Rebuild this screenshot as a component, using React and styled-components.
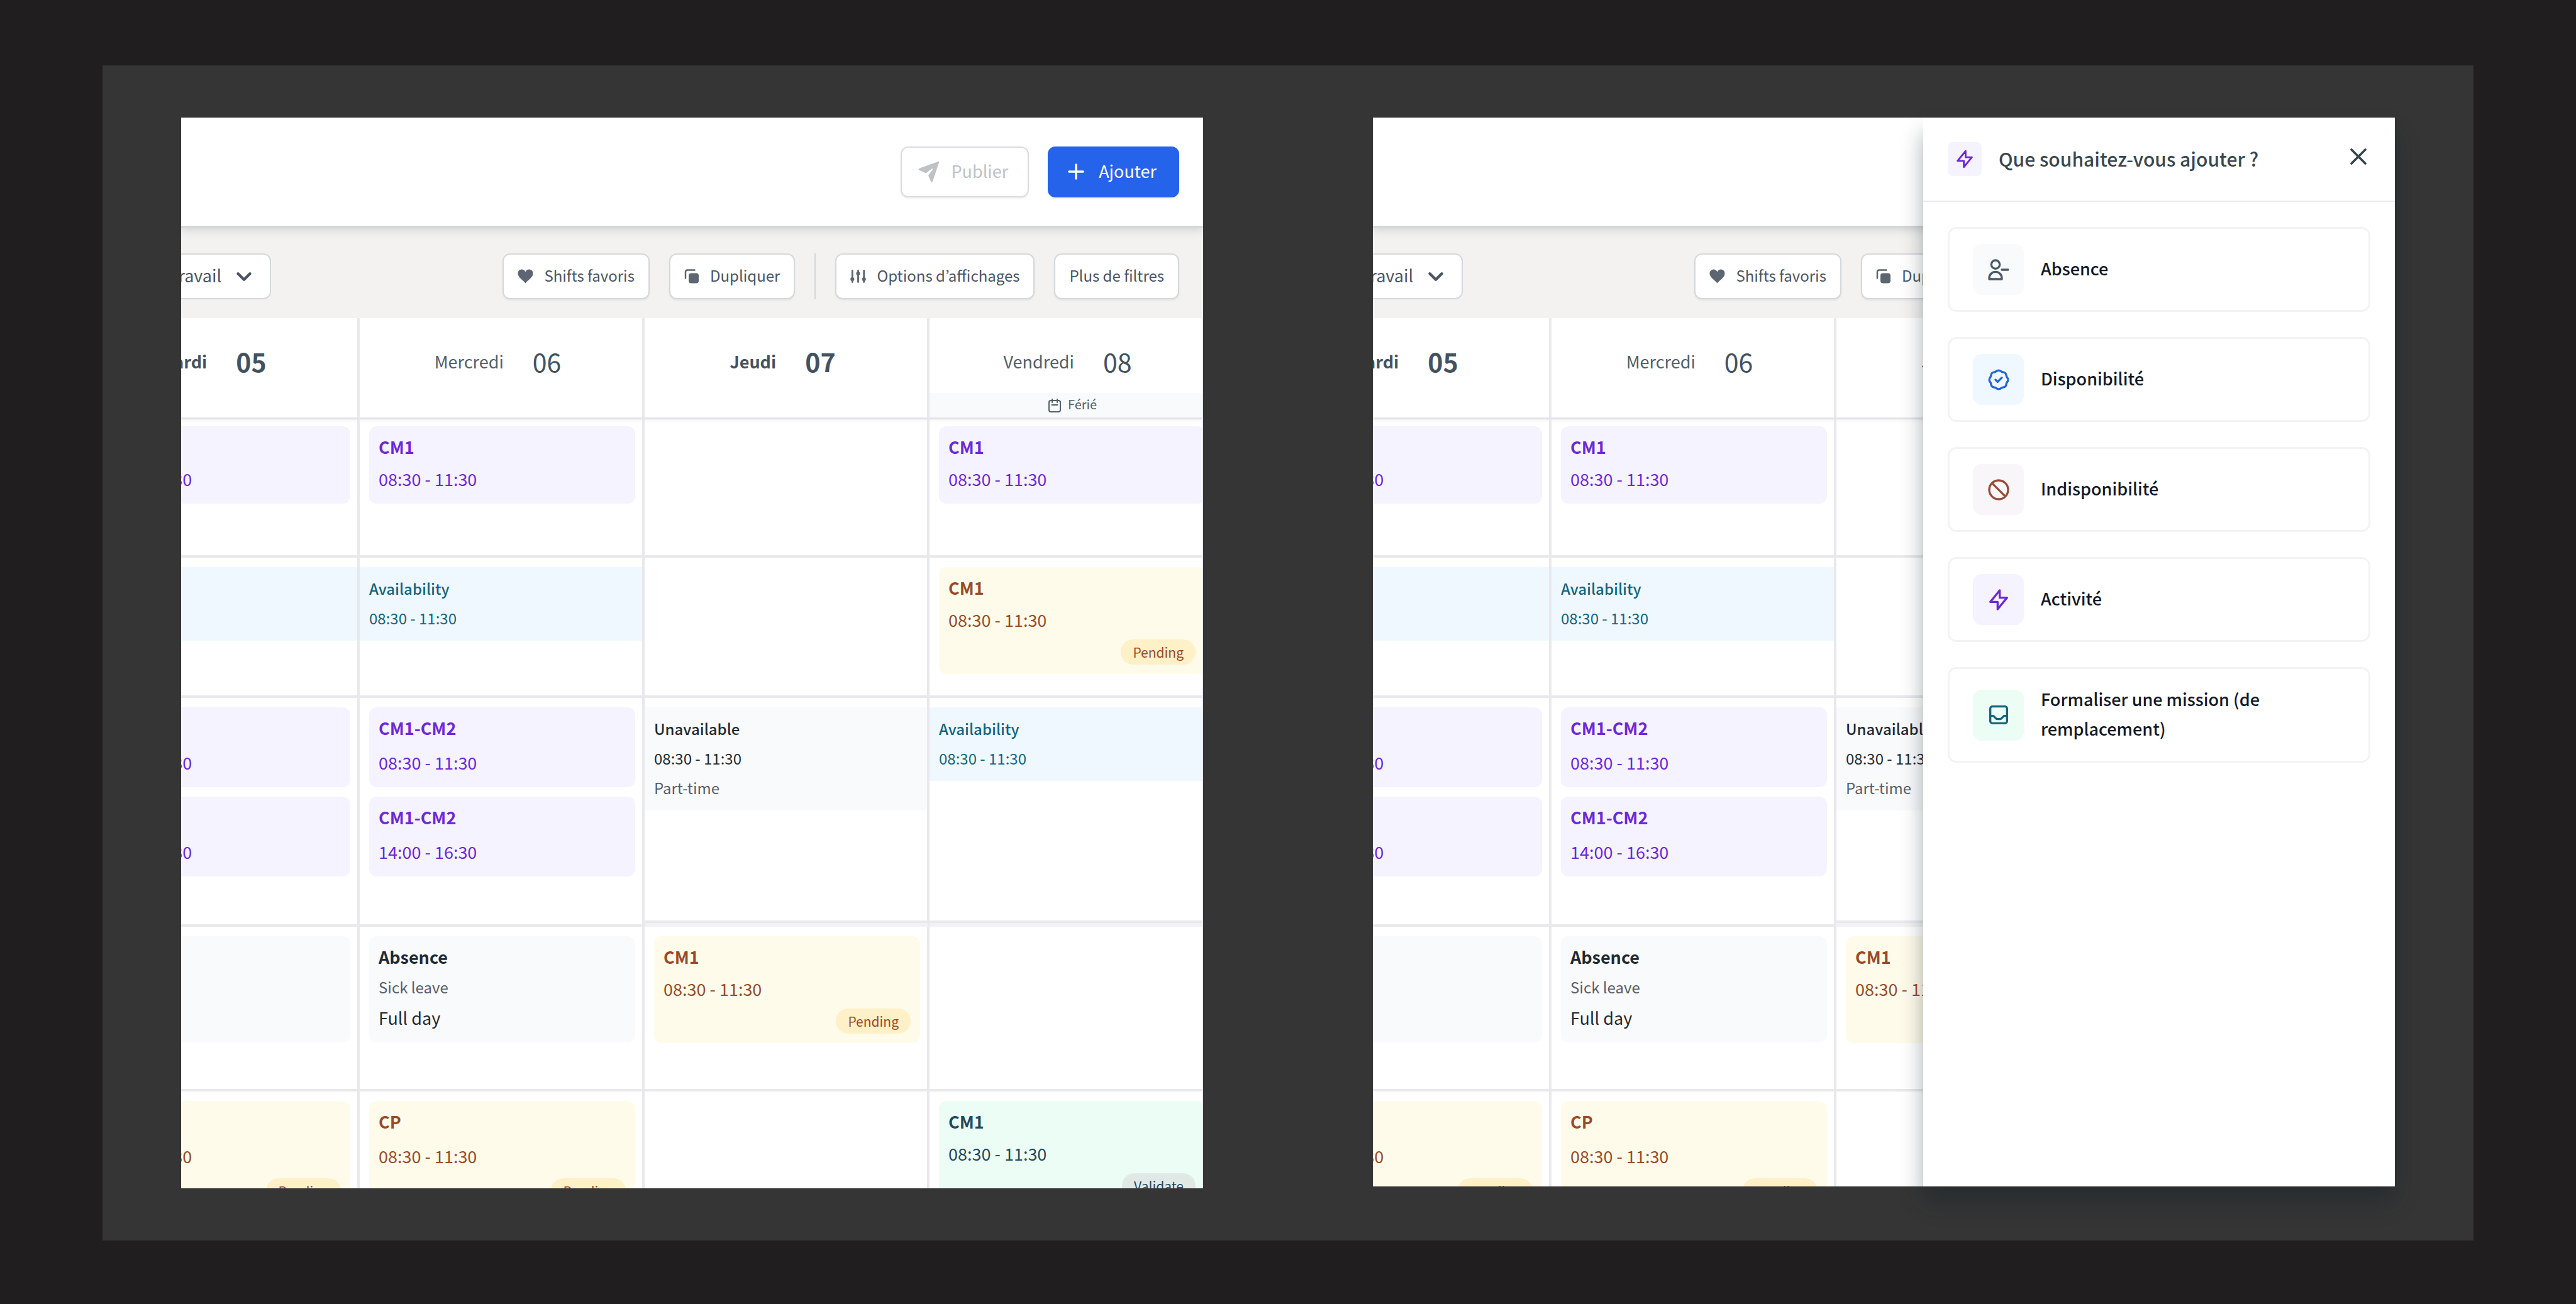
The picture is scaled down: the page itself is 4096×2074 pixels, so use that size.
import React from "react";
import styled, { createGlobalStyle } from "styled-components";
import { ChevronDown, Plus, X } from "lucide-react";

const GlobalStyle = createGlobalStyle`
  * { box-sizing: border-box; }
  html, body, #root { height: 100%; }
  body {
    margin: 0;
    background: #211e1f;
    font-family: "Noto Sans CJK JP", "Noto Sans", sans-serif;
    font-size: 27px;
    color: #1f2933;
  }
  button, select { font: inherit; color: inherit; }
`;

const Page = styled.main`
  min-height: 100%;
  padding: 104px 163px 102px;
  display: flex;
`;

const Board = styled.div`
  flex: 1;
  display: flex;
  gap: 270px;
  padding: 83px 125px;
  background: #353535;
`;

const Screen = styled.section`
  position: relative;
  flex: 1;
  min-width: 0;
  height: ${(p) => p.$height}px;
`;

const Viewport = styled.div`
  height: 100%;
  overflow: hidden;
  background: #fff;
`;

const Label = styled.span`
  padding-bottom: 4px;
`;

const TopBar = styled.header`
  position: relative;
  display: flex;
  justify-content: flex-end;
  align-items: center;
  gap: 30px;
  height: 172px;
  padding: 0 38px;
  background: #fff;
  box-shadow: 0 4px 1px #d6d7d7, 0 4px 16px rgba(30, 50, 60, 0.22);
`;

const ActionButton = styled.button`
  display: flex;
  align-items: center;
  gap: 17px;
  height: 81px;
  padding: 0 ${(p) => (p.$primary ? 34 : 31)}px 0 ${(p) => (p.$primary ? 24 : 25)}px;
  border: 2px solid ${(p) => (p.$primary ? "#2563eb" : "#dadcdf")};
  border-radius: 12px;
  background: ${(p) => (p.$primary ? "#2563eb" : "#fff")};
  color: ${(p) => (p.$primary ? "#fff" : "#bfc2c5")};
  box-shadow: 0 2px 3px rgba(0, 0, 0, 0.06);
`;

const Toolbar = styled.div`
  display: flex;
  align-items: stretch;
  gap: 31px;
  padding: 44px 38px 30px 0;
  background: #f3f2f0;
`;

const FilterSlot = styled.div`
  display: flex;
  justify-content: flex-end;
  width: 143px;
  margin-right: auto;
`;

const SelectBox = styled.div`
  flex: none;
  display: flex;
  align-items: center;
  gap: 16px;
  padding: 0 22px;
  border: 2px solid #d5d8dc;
  border-radius: 12px;
  background: #fff;
  color: #4b5563;
`;

const Select = styled.select`
  appearance: none;
  border: 0;
  padding: 0 0 4px;
  background: transparent;
`;

const ToolButton = styled.button`
  display: flex;
  align-items: center;
  gap: 17px;
  height: 73px;
  padding: 0 22px;
  border: 2px solid #d5d8dc;
  border-radius: 12px;
  background: #fff;
  color: #4b5563;
  font-size: 24px;
  white-space: nowrap;
  box-shadow: 0 2px 3px rgba(0, 0, 0, 0.06);

  svg {
    color: #5b6672;
  }
`;

const Divider = styled.span`
  width: 2px;
  background: #d3d7dc;
`;

const GridFrame = styled.div`
  overflow: hidden;
  border-right: 2px solid #e9eaee;
`;

const Grid = styled.table`
  width: calc(100% + 189px);
  margin-left: -169px;
  table-layout: fixed;
  border-collapse: separate;
  border-spacing: 0;
`;

const DayHead = styled.th`
  height: 161px;
  padding: 0;
  vertical-align: top;
  font-weight: ${(p) => (p.$strong ? 700 : 400)};
  color: ${(p) => (p.$strong ? "#44525f" : "#535f6b")};
  border-right: 4px solid #e8e8ed;
  border-bottom: 3px solid #e1e3e6;
`;

const DayLabel = styled.div`
  display: flex;
  justify-content: center;
  align-items: center;
  gap: 46px;
  height: 119px;
  padding: 17px 10px 0 0;
`;

const DayNumber = styled.span`
  font-size: 41px;
  color: #44525f;
`;

const Holiday = styled.div`
  display: flex;
  justify-content: center;
  align-items: center;
  gap: 11px;
  height: 39px;
  padding-left: 6px;
  background: #f9fafc;
  font-size: 20px;
  font-weight: 400;
`;

const Row = styled.tr`
  height: ${(p) => p.$h}px;
`;

const Cell = styled.td`
  padding: ${(p) => (p.$first ? 11 : 15)}px 0 0;
  vertical-align: top;
  border-right: 4px solid #e8e8ed;
  border-bottom: ${(p) => (p.$split ? "6px solid #f3f2f3" : "4px solid #e8e8ed")};
  box-shadow: ${(p) =>
    p.$split ? "inset 0 -4px 0 #e8e9ee" : p.$first ? "inset 0 5px 5px -3px rgba(0,0,0,0.05)" : "none"};
`;

const tones = {
  violet: { bg: "#f5f3ff", fg: "#6d28d9" },
  amber: { bg: "#fffbeb", fg: "#9a4a27", badge: "#fef0c7" },
  green: { bg: "#ecfdf5", fg: "#24485c", badge: "#e1e9e7" },
  grey: { bg: "#f9fafc", fg: "#1f2a33" },
  sky: { bg: "#f0f8ff", fg: "#12657f" },
};

const Card = styled.article`
  display: flex;
  flex-direction: column;
  margin: 0 11px 15px 15px;
  padding: 7px 15px 14px;
  border-radius: 12px;
  background: ${(p) => tones[p.$tone].bg};
  color: ${(p) => tones[p.$tone].fg};
  line-height: 51px;
`;

const CardTitle = styled.strong`
  font-weight: 700;
  margin-bottom: ${(p) => (p.$loose ? 4 : 0)}px;
`;

const CardNote = styled.span`
  font-size: 24px;
  line-height: 46px;
  color: #56606c;
`;

const Badge = styled.span`
  align-self: flex-end;
  margin: ${(p) => (p.$loose ? 10 : 6)}px 0 1px;
  padding: 0 19px;
  border-radius: 20px;
  background: ${(p) => tones[p.$tone].badge};
  font-size: 21px;
  line-height: 40px;
`;

const Band = styled.article`
  display: flex;
  flex-direction: column;
  padding: 10px 15px 13px;
  background: ${(p) => tones[p.$tone].bg};
  color: ${(p) => tones[p.$tone].fg};
  font-size: 24px;
  line-height: 47px;
`;

const BandTitle = styled.strong`
  font-weight: 500;
`;

const BandNote = styled.span`
  color: #56606c;
`;

const Drawer = styled.aside`
  position: absolute;
  top: 0;
  right: 0;
  bottom: 0;
  width: 750px;
  background: #fff;
  box-shadow: 0 24px 34px -2px rgba(16, 32, 40, 0.4);
`;

const DrawerHead = styled.header`
  display: flex;
  align-items: center;
  height: 134px;
  padding: 0 36px 0 39px;
  border-bottom: 2px solid #e9ebed;
  color: #37474f;
`;

const DrawerTitle = styled.h2`
  flex: 1;
  margin: 0 0 0 27px;
  padding-bottom: 3px;
  font-size: 30px;
  font-weight: 500;
`;

const CloseButton = styled.button`
  display: flex;
  padding: 0 0 8px;
  border: 0;
  background: none;
`;

const IconTile = styled.span`
  flex: none;
  display: flex;
  align-items: center;
  justify-content: center;
  width: ${(p) => p.$size}px;
  height: ${(p) => p.$size}px;
  border-radius: ${(p) => (p.$size > 60 ? 14 : 8)}px;
  background: ${(p) => p.$bg};
  color: ${(p) => p.$fg};
`;

const Choices = styled.div`
  display: flex;
  flex-direction: column;
  gap: 40px;
  padding: 40px 39px;
`;

const Choice = styled.button`
  display: flex;
  align-items: center;
  gap: 27px;
  padding: 24px 37px;
  border: 3px solid #f3f3f5;
  border-radius: 14px;
  background: #fff;
  color: #111827;
  font-weight: 500;
  line-height: 47px;
  text-align: left;
`;

const SendIcon = () => (
  <svg width="36" height="36" viewBox="0 0 36 36" fill="currentColor" aria-hidden="true">
    <path d="M34 2 L23.5 33.5 Q22.8 35 21.6 33.4 L18 25.5 Q17.4 23.8 18.4 22.6 L24.5 15 Q25 12 22.4 12.8 L14.5 19.2 Q13.4 20 12.2 19.4 L2.6 15.2 Q1.2 14.4 2.6 13.4 Z" stroke="currentColor" strokeLinejoin="round" />
  </svg>
);

const HeartIcon = () => (
  <svg width="25" height="23" viewBox="0 0 25 23" fill="currentColor" aria-hidden="true">
    <path d="M12.5 22.5 C9 18 1 13.5 0.5 7.5 C0.2 3.5 3 0.5 6.6 0.5 C9.3 0.5 11.5 2 12.5 4.4 C13.5 2 15.7 0.5 18.4 0.5 C22 0.5 24.8 3.5 24.5 7.5 C24 13.5 16 18 12.5 22.5 Z" />
  </svg>
);

const CopyIcon = () => (
  <svg width="24" height="23" viewBox="0 0 24 23" aria-hidden="true">
    <rect x="7" y="6.5" width="16" height="16" rx="4" fill="currentColor" />
    <path d="M2 14.5 V4.5 Q2 1.5 5 1.5 H16.5" fill="none" stroke="currentColor" strokeWidth="2.5" strokeLinecap="round" />
  </svg>
);

const SlidersIcon = () => (
  <svg width="25" height="25" viewBox="0 0 25 25" fill="none" stroke="currentColor" strokeWidth="2.8" strokeLinecap="round" aria-hidden="true">
    <path d="M3.3 3.5 V21.5 M12.5 3.5 V21.5 M21.7 3.5 V21.5" />
    <g fill="currentColor" strokeWidth="0">
      <circle cx="3.3" cy="17" r="3.1" />
      <circle cx="12.5" cy="8" r="3.1" />
      <circle cx="21.7" cy="17" r="3.1" />
    </g>
  </svg>
);

const CalendarIcon = () => (
  <svg width="20" height="22" viewBox="0 0 20 22" fill="none" stroke="currentColor" strokeWidth="2" strokeLinecap="round" aria-hidden="true">
    <rect x="1" y="3" width="18" height="18" rx="3" />
    <path d="M6 1 V6 M14 1 V6 M5.5 10 H14.5" />
  </svg>
);

const outlines = {
  userRemove: "M13 7a4 4 0 11-8 0 4 4 0 018 0zM9 14a6 6 0 00-6 6v1h12v-1a6 6 0 00-6-6zM21 12h-6",
  badgeCheck:
    "M9 12l2 2 4-4M7.835 4.697a3.42 3.42 0 001.946-.806 3.42 3.42 0 014.438 0 3.42 3.42 0 001.946.806 3.42 3.42 0 013.138 3.138 3.42 3.42 0 00.806 1.946 3.42 3.42 0 010 4.438 3.42 3.42 0 00-.806 1.946 3.42 3.42 0 01-3.138 3.138 3.42 3.42 0 00-1.946.806 3.42 3.42 0 01-4.438 0 3.42 3.42 0 00-1.946-.806 3.42 3.42 0 01-3.138-3.138 3.42 3.42 0 00-.806-1.946 3.42 3.42 0 010-4.438 3.42 3.42 0 00.806-1.946 3.42 3.42 0 013.138-3.138z",
  ban: "M18.364 18.364A9 9 0 005.636 5.636m12.728 12.728A9 9 0 015.636 5.636m12.728 12.728L5.636 5.636",
  bolt: "M13 10V3L4 14h7v7l9-11h-7z",
  inbox:
    "M20 13V6a2 2 0 00-2-2H6a2 2 0 00-2 2v7m16 0v5a2 2 0 01-2 2H6a2 2 0 01-2-2v-5m16 0h-2.586a1 1 0 00-.707.293l-2.414 2.414a1 1 0 01-.707.293h-3.172a1 1 0 01-.707-.293l-2.414-2.414A1 1 0 006.586 13H4",
};

const OutlineIcon = ({ name, size = 40 }) => (
  <svg width={size} height={size} viewBox="0 0 24 24" fill="none" stroke="currentColor" strokeWidth="2" strokeLinecap="round" strokeLinejoin="round" aria-hidden="true">
    <path d={outlines[name]} />
  </svg>
);

const days = [
  { name: "Mardi", number: "05", strong: true },
  { name: "Mercredi", number: "06" },
  { name: "Jeudi", number: "07", strong: true },
  { name: "Vendredi", number: "08", holiday: "Férié" },
];

const AM = "08:30 - 11:30";
const PM = "14:00 - 16:30";
const card = (tone, title, time, extra = {}) => ({ kind: "card", tone, title, time, ...extra });
const band = (tone, title, time, note) => ({ kind: "band", tone, title, time, note });

const doubleShift = [
  card("violet", "CM1-CM2", AM, { loose: true }),
  card("violet", "CM1-CM2", PM, { loose: true }),
];
const sick = [card("grey", "Absence", "Full day", { note: "Sick leave" })];
const pending = { badge: "Pending" };

const rows = [
  { h: 220, cells: [[card("violet", "CM1", AM)], [card("violet", "CM1", AM)], [], [card("violet", "CM1", AM)]] },
  { h: 223, cells: [[band("sky", "", "")], [band("sky", "Availability", AM)], [], [card("amber", "CM1", AM, pending)]] },
  {
    h: 364,
    split: true,
    cells: [doubleShift, doubleShift, [band("grey", "Unavailable", AM, "Part-time")], [band("sky", "Availability", AM)]],
  },
  { h: 262, cells: [sick, sick, [card("amber", "CM1", AM, pending)], []] },
  {
    h: 262,
    cells: [
      [card("amber", "CP", AM, { ...pending, loose: true })],
      [card("amber", "CP", AM, { ...pending, loose: true })],
      [],
      [card("green", "CM1", AM, { badge: "Validate" })],
    ],
  },
];

const Entry = ({ item }) =>
  item.kind === "card" ? (
    <Card $tone={item.tone}>
      <CardTitle $loose={item.loose}>{item.title}</CardTitle>
      {item.note && <CardNote>{item.note}</CardNote>}
      <span>{item.time}</span>
      {item.badge && (
        <Badge $tone={item.tone} $loose={item.loose}>
          {item.badge}
        </Badge>
      )}
    </Card>
  ) : (
    <Band $tone={item.tone}>
      <BandTitle>{item.title || "\u00a0"}</BandTitle>
      <span>{item.time || "\u00a0"}</span>
      {item.note && <BandNote>{item.note}</BandNote>}
    </Band>
  );

const Planning = () => (
  <Viewport>
    <TopBar>
      <ActionButton type="button">
        <SendIcon />
        <Label>Publier</Label>
      </ActionButton>
      <ActionButton type="button" $primary>
        <Plus size={38} strokeWidth={2.2} />
        <Label>Ajouter</Label>
      </ActionButton>
    </TopBar>
    <Toolbar>
      <FilterSlot>
        <SelectBox>
          <Select aria-label="Lieu de travail">
            <option>Lieu de travail</option>
          </Select>
          <ChevronDown size={38} strokeWidth={2.8} />
        </SelectBox>
      </FilterSlot>
      <ToolButton type="button">
        <HeartIcon />
        <Label>Shifts favoris</Label>
      </ToolButton>
      <ToolButton type="button">
        <CopyIcon />
        <Label>Dupliquer</Label>
      </ToolButton>
      <Divider />
      <ToolButton type="button">
        <SlidersIcon />
        <Label>Options d’affichages</Label>
      </ToolButton>
      <ToolButton type="button">
        <Label>Plus de filtres</Label>
      </ToolButton>
    </Toolbar>
    <GridFrame>
      <Grid>
        <thead>
          <tr>
            {days.map((day) => (
              <DayHead key={day.number} scope="col" $strong={day.strong}>
                <DayLabel>
                  <span>{day.name}</span>
                  <DayNumber>{day.number}</DayNumber>
                </DayLabel>
                {day.holiday && (
                  <Holiday>
                    <CalendarIcon />
                    <Label>{day.holiday}</Label>
                  </Holiday>
                )}
              </DayHead>
            ))}
          </tr>
        </thead>
        <tbody>
          {rows.map((row, r) => (
            <Row key={r} $h={row.h}>
              {row.cells.map((items, c) => (
                <Cell key={c} $first={r === 0} $split={row.split && c > 1}>
                  {items.map((item, i) => (
                    <Entry key={i} item={item} />
                  ))}
                </Cell>
              ))}
            </Row>
          ))}
        </tbody>
      </Grid>
    </GridFrame>
  </Viewport>
);

const choices = [
  { label: "Absence", icon: "userRemove", bg: "#f9fafb", fg: "#4b5a67" },
  { label: "Disponibilité", icon: "badgeCheck", bg: "#f0f8ff", fg: "#2166d6" },
  { label: "Indisponibilité", icon: "ban", bg: "#f8f6f8", fg: "#9a4a35" },
  { label: "Activité", icon: "bolt", bg: "#f5f3ff", fg: "#6d28d9" },
  { label: "Formaliser une mission (de remplacement)", icon: "inbox", bg: "#ecfdf5", fg: "#12657f" },
];

const AddDrawer = () => (
  <Drawer aria-label="Ajouter">
    <DrawerHead>
      <IconTile $size={54} $bg="#f5f3ff" $fg="#6d28d9">
        <OutlineIcon name="bolt" size={34} />
      </IconTile>
      <DrawerTitle>Que souhaitez-vous ajouter ?</DrawerTitle>
      <CloseButton type="button" aria-label="Fermer">
        <X size={44} strokeWidth={2} />
      </CloseButton>
    </DrawerHead>
    <Choices>
      {choices.map((choice) => (
        <Choice key={choice.label} type="button">
          <IconTile $size={81} $bg={choice.bg} $fg={choice.fg}>
            <OutlineIcon name={choice.icon} />
          </IconTile>
          <Label>{choice.label}</Label>
        </Choice>
      ))}
    </Choices>
  </Drawer>
);

export default function App() {
  return (
    <>
      <GlobalStyle />
      <Page>
        <Board>
          <Screen $height={1703}>
            <Planning />
          </Screen>
          <Screen $height={1700}>
            <Planning />
            <AddDrawer />
          </Screen>
        </Board>
      </Page>
    </>
  );
}
